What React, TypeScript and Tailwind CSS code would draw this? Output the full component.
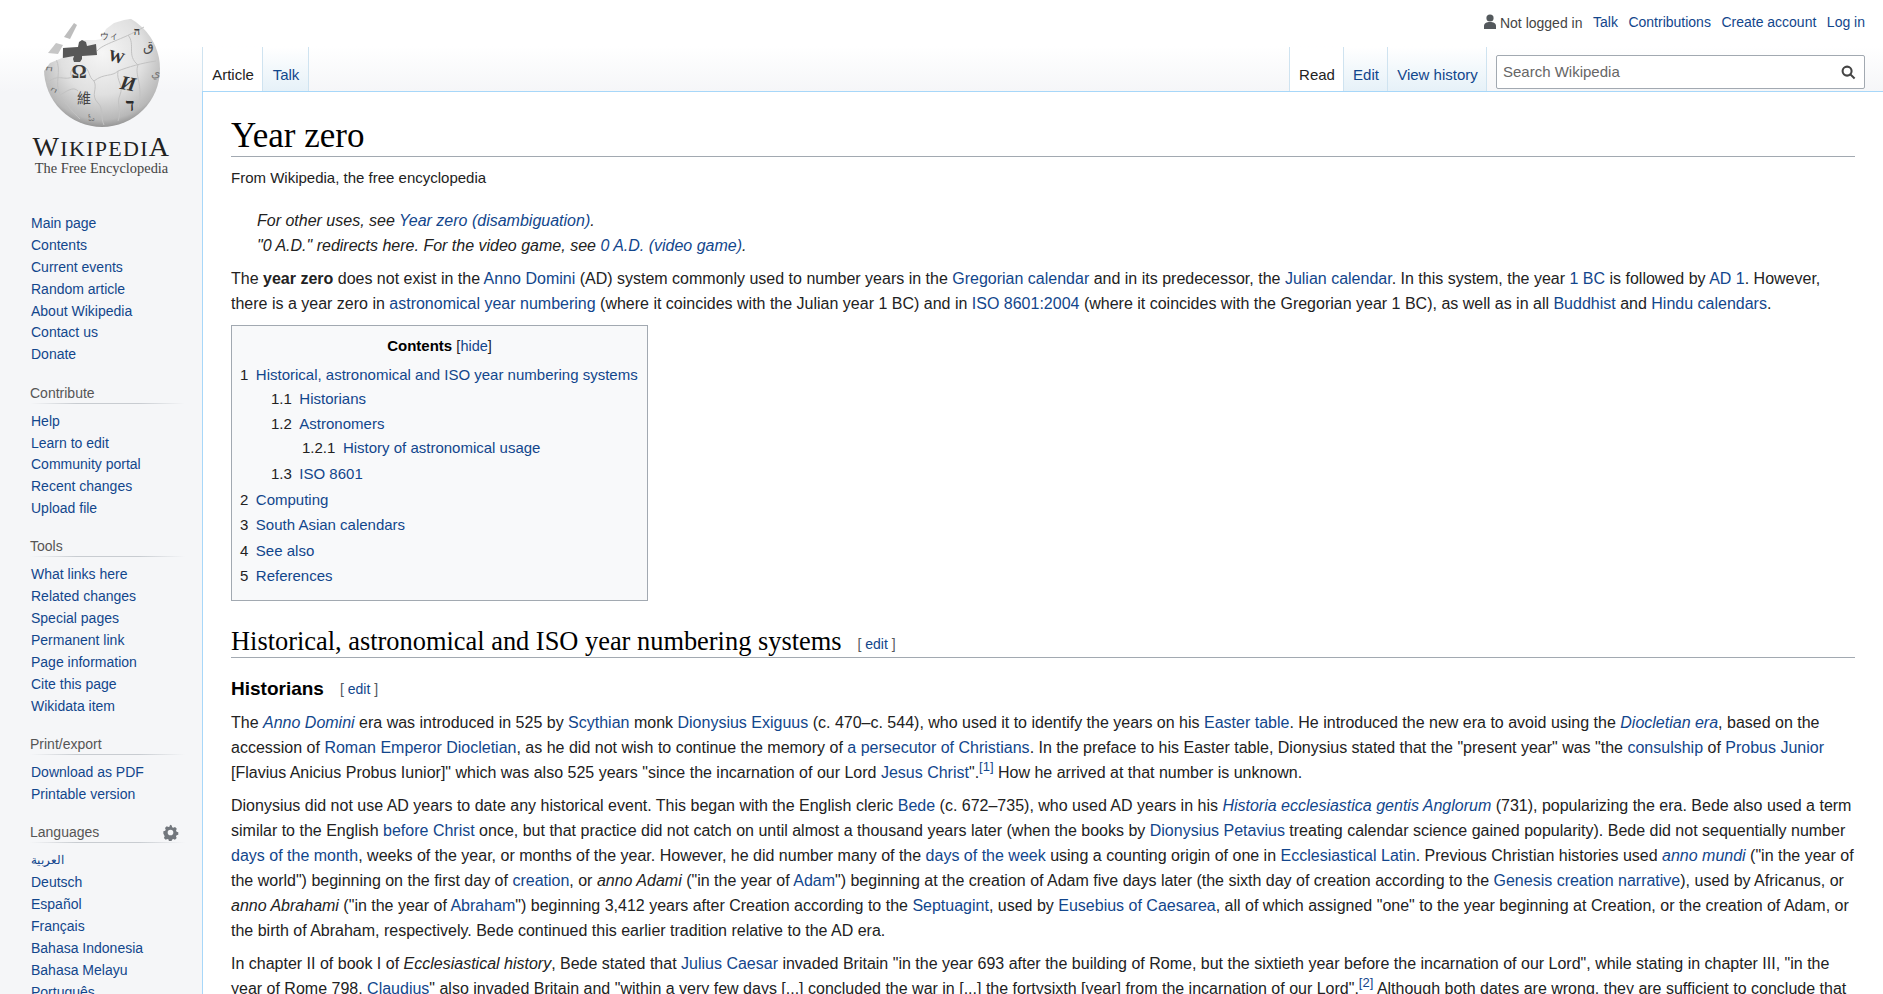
import { ReactNode } from "react";

const sans = "font-['Liberation_Sans',Arial,sans-serif]";

function L({ children }: { children: ReactNode }) {
  return <a className="text-[#12468c]">{children}</a>;
}

function Globe() {
  return (
    <svg width="116" height="116" viewBox="0 0 116 116" className="block">
      <defs>
        <radialGradient id="ball" cx="0.5" cy="0.36" r="0.72">
          <stop offset="0" stopColor="#f6f6f6" />
          <stop offset="0.5" stopColor="#e0e0e0" />
          <stop offset="0.8" stopColor="#b8b8b8" />
          <stop offset="1" stopColor="#6a6a6a" />
        </radialGradient>
        <clipPath id="notch">
          <path d="M116 116H0V60L6 52 18 47 19 37 34 36 38 29 52 29 57 28 62 18 70 12 80 9 92 7 100 10 116 10Z" />
        </clipPath>
      </defs>
      <g clipPath="url(#notch)">
        <circle cx="58" cy="58" r="58" fill="url(#ball)" />
        <g fill="none" stroke="#c2c2c2" strokeWidth="1">
          <path d="M3 72C14 62 20 70 28 66 24 60 30 54 40 56 46 58 44 66 50 70 60 62 68 66 74 60 84 56 98 52 112 50" />
          <path d="M53 40C60 32 76 30 100 16" />
          <path d="M50 70C54 78 46 84 54 92 60 98 56 106 60 114" />
          <path d="M74 60C72 70 80 74 76 84 72 92 78 100 74 110" />
          <path d="M84 24C92 34 82 44 94 54 90 64 100 74 94 96" />
          <path d="M12 48C18 60 10 72 16 84 24 96 28 100 36 108" />
          <path d="M16 84C26 78 30 76 34 80" />
        </g>
      </g>
      <path d="M20 26 30 12 33 14 26 28Z" fill="#bdbdbd" />
      <path d="M4 42 12 32 19 34 14 43Z" fill="#c6c6c6" />
      <path d="M19 37 34 36 35 31 38 29 42 31 43 35 52 33 53 44 38 45 38 48 36 51 30 51 29 48 30 45 19 47Z" fill="#585858" />
      <g fontFamily="'Liberation Serif',serif" textAnchor="middle">
        <text x="35" y="67" fontSize="19" fontWeight="bold" fill="#3c3c3c">Ω</text>
        <text x="71" y="51" fontSize="16" fontWeight="bold" fill="#333" transform="rotate(16 71 51)">W</text>
        <text x="83" y="79" fontSize="20" fontWeight="bold" fontStyle="italic" fill="#333" transform="rotate(10 83 79)">И</text>
        <text x="86" y="100" fontSize="18" fontWeight="bold" fill="#2a2a2a">ד</text>
        <text x="40" y="92" fontSize="14" fontFamily="'Noto Sans CJK SC',sans-serif" fill="#444">維</text>
        <text x="104" y="40" fontSize="14" fill="#4a4a4a">ق</text>
        <text x="111" y="66" fontSize="12" fill="#777">ي</text>
        <text x="65" y="28" fontSize="9" fill="#444">ウィ</text>
        <text x="93" y="24" fontSize="11" fontWeight="bold" fill="#3a3a3a">ה</text>
        <text x="8" y="58" fontSize="10" fill="#666" transform="rotate(-80 8 58)">ב</text>
        <text x="12" y="80" fontSize="9" fill="#666" transform="rotate(-60 12 80)">ב</text>
        <text x="47" y="110" fontSize="10" fill="#777">ಓ</text>
      </g>
    </svg>
  );
}

function Nav({ title, items, gear }: { title?: string; items: string[]; gear?: boolean }) {
  return (
    <div className="mb-[16.4px]">
      {title && (
        <div className="relative mb-[6px] ml-[30px] h-[22px] w-[155px] bg-[linear-gradient(to_right,transparent,#c8ccd1_30%,#c8ccd1_70%,transparent)] bg-[length:100%_1px] bg-bottom bg-no-repeat text-[14px] leading-[22px] text-[#555]">
          {title}
          {gear && (
            <svg viewBox="0 0 24 24" className="absolute right-[6px] top-[3px] h-[17px] w-[17px]" fill="#72777d">
              <path
                d="M13.8 2l.5 2.600c.6.2 1.2.4 1.7.8l2.400-1.100 2.500 2.500-1.100 2.400c.3.5.6 1.100.8 1.700l2.400.9v3.500l-2.500.5c-.2.6-.4 1.200-.8 1.700l1.100 2.400-2.500 2.500-2.400-1.100c-.5.3-1.100.6-1.700.8l-.9 2.500h-3.500l-.5-2.600c-.6-.2-1.200-.4-1.700-.8l-2.400 1.100-2.500-2.500 1.100-2.400c-.3-.5-.6-1.100-.8-1.700L1.900 13.700v-3.500l2.600-.5c.2-.6.4-1.200.8-1.700L4.200 5.600l2.500-2.500 2.400 1.100c.5-.3 1.100-.6 1.700-.8l.5-2.500zM12 8a4 4 0 100 8 4 4 0 000-8z"
                fillRule="evenodd"
              />
            </svg>
          )}
        </div>
      )}
      <ul className="pl-[31px]">
        {items.map((it) => (
          <li key={it} className={`h-[21.9px] leading-[22px] text-[#12468c] ${it === "العربية" ? "text-[12px]" : "text-[14px]"}`}>
            {it}
          </li>
        ))}
      </ul>
    </div>
  );
}

function Sidebar() {
  return (
    <aside className="w-[202px] shrink-0">
      <div className="flex h-[212px] flex-col items-center pl-[1px] pt-[11px]">
        <Globe />
        <div className="mt-[8px] font-['Liberation_Serif',serif] text-[22px] leading-[24px] tracking-[1.3px] text-[#222]">
          <span className="text-[28px]">W</span>IKIPEDI<span className="text-[28px]">A</span>
        </div>
        <div className="font-['Liberation_Serif',serif] text-[14.4px] leading-[14px] text-[#444]">The Free Encyclopedia</div>
      </div>
      <Nav items={["Main page", "Contents", "Current events", "Random article", "About Wikipedia", "Contact us", "Donate"]} />
      <Nav title="Contribute" items={["Help", "Learn to edit", "Community portal", "Recent changes", "Upload file"]} />
      <Nav title="Tools" items={["What links here", "Related changes", "Special pages", "Permanent link", "Page information", "Cite this page", "Wikidata item"]} />
      <Nav title="Print/export" items={["Download as PDF", "Printable version"]} />
      <Nav title="Languages" gear items={["العربية", "Deutsch", "Español", "Français", "Bahasa Indonesia", "Bahasa Melayu", "Português"]} />
    </aside>
  );
}

function Tab({ label, active, w }: { label: string; active?: boolean; w: string }) {
  return (
    <div
      className={`${w} flex h-[44px] items-center justify-center border-r border-r-[#cfe3f0] pl-[1px] pt-[12px] text-[15px] ${
        active ? "bg-white text-[#222]" : "bg-linear-to-b from-white to-[#e6f1f8] text-[#12468c]"
      }`}
    >
      {label}
    </div>
  );
}

function Header() {
  return (
    <div className="flex h-[92px] flex-col">
      <div className="flex h-[48px] items-start justify-end gap-[10.5px] pr-[18px] pt-[12px] text-[14px] leading-[20px] text-[#12468c]">
        <span className="flex items-center pt-[1px] text-[#444]">
          <svg viewBox="0 0 14 16" className="mb-[3px] mr-[3px] h-[16px] w-[14px]" fill="#54595d">
            <circle cx="7" cy="4" r="3.6" />
            <path d="M1 15v-3c0-2.600 2.500-4 6-4s6 1.400 6 4v3z" />
          </svg>
          Not logged in
        </span>
        <span>Talk</span>
        <span>Contributions</span>
        <span>Create account</span>
        <span>Log in</span>
      </div>
      <div className="flex h-[44px] items-end border-b border-[#a7d7f9]">
        <div className="flex h-[44px] border-l border-l-[#cfe3f0]">
          <Tab label="Article" active w="w-[60px]" />
          <Tab label="Talk" w="w-[46px]" />
        </div>
        <div className="flex-1" />
        <div className="flex h-[44px] border-l border-l-[#cfe3f0]">
          <Tab label="Read" active w="w-[54px]" />
          <Tab label="Edit" w="w-[44px]" />
          <Tab label="View history" w="w-[99px]" />
        </div>
        <div className="mb-[2px] ml-[9px] mr-[18px] flex h-[34px] w-[369px] items-center justify-between rounded-[2px] border border-[#a2a9b1] bg-white pl-[6px] pr-[8px] pt-[1px] text-[15px] text-[#666]">
          Search Wikipedia
          <svg viewBox="0 0 16 16" className="h-[15px] w-[15px]" fill="none" stroke="#444" strokeWidth="2.2">
            <circle cx="6.5" cy="6.5" r="4.8" />
            <path d="M10 10l4.500 4.500" />
          </svg>
        </div>
      </div>
    </div>
  );
}

const tocRows = [
  { n: "1", t: "Historical, astronomical and ISO year numbering systems", pad: "pl-0", mb: "" },
  { n: "1.1", t: "Historians", pad: "pl-[31px]", mb: "" },
  { n: "1.2", t: "Astronomers", pad: "pl-[31px]", mb: "" },
  { n: "1.2.1", t: "History of astronomical usage", pad: "pl-[62px]", mb: "mb-[1px]" },
  { n: "1.3", t: "ISO 8601", pad: "pl-[31px]", mb: "mb-[1px]" },
  { n: "2", t: "Computing", pad: "pl-0", mb: "mb-[1px]" },
  { n: "3", t: "South Asian calendars", pad: "pl-0", mb: "mb-[1px]" },
  { n: "4", t: "See also", pad: "pl-0", mb: "mb-[1px]" },
  { n: "5", t: "References", pad: "pl-0", mb: "" },
];

function Toc() {
  return (
    <div className="mt-[8px] h-[276px] w-[417px] border border-[#a2a9b1] bg-[#f8f9fa] px-[8px] pt-[8px] text-[15px]">
      <div className="mb-[5px] h-[24px] text-center leading-[24px]">
        <b className="text-[#000]">Contents</b> <span className="text-[14.5px]">[<L>hide</L>]</span>
      </div>
      {tocRows.map((r) => (
        <div key={r.n} className={`flex h-[24.6px] gap-[7.5px] whitespace-nowrap leading-[24.6px] text-[#222] ${r.pad} ${r.mb}`}>
          <span>{r.n}</span>
          <L>{r.t}</L>
        </div>
      ))}
    </div>
  );
}

function EditLink() {
  return (
    <span className={`${sans} ml-[16px] align-[1px] text-[14px] font-normal text-[#54595d]`}>
      [ <L>edit</L> ]
    </span>
  );
}

function Article() {
  return (
    <main className="h-[902px] overflow-hidden border-l border-[#a7d7f9] bg-white px-[28px] pt-[20px] text-[16px] leading-[24.9px] text-[#222]">
      <h1 className="h-[45px] border-b border-[#a2a9b1] font-['Liberation_Serif',serif] text-[35px] leading-[48px] text-[#000]">
        Year zero
      </h1>
      <div className="mt-[8px] h-[25px] text-[15px] leading-[25px]">From Wikipedia, the free encyclopedia</div>
      <div className="mt-[19px] pl-[26px] italic">
        <div>
          For other uses, see <L>Year zero (disambiguation)</L>.
        </div>
        <div>
          "0 A.D." redirects here. For the video game, see <L>0 A.D. (video game)</L>.
        </div>
      </div>
      <p className="mt-[8px]">
        The <b>year zero</b> does not exist in the <L>Anno Domini</L> (AD) system commonly used to number years in the <L>Gregorian calendar</L> and in its predecessor, the <L>Julian calendar</L>. In this system, the year <L>1 BC</L> is followed by <L>AD 1</L>. However, there is a year zero in <L>astronomical year numbering</L> (where it coincides with the Julian year 1 BC) and in <L>ISO 8601:2004</L> (where it coincides with the Gregorian year 1 BC), as well as in all <L>Buddhist</L> and <L>Hindu calendars</L>.
      </p>
      <Toc />
      <h2 className="mt-[22px] h-[35px] border-b border-[#a2a9b1] font-['Liberation_Serif',serif] text-[26.4px] leading-[36px] text-[#000]">
        Historical, astronomical and ISO year numbering systems
        <EditLink />
      </h2>
      <h3 className={`${sans} mt-[17px] h-[28px] text-[19px] font-bold leading-[28px] text-[#000]`}>
        Historians
        <EditLink />
      </h3>
      <p className="mt-[8.5px]">
        The <L><i>Anno Domini</i></L> era was introduced in 525 by <L>Scythian</L> monk <L>Dionysius Exiguus</L> (c. 470–c. 544), who used it to identify the years on his <L>Easter table</L>. He introduced the new era to avoid using the <L><i>Diocletian era</i></L>, based on the accession of <L>Roman Emperor Diocletian</L>, as he did not wish to continue the memory of <L>a persecutor of Christians</L>. In the preface to his Easter table, Dionysius stated that the "present year" was "the <L>consulship</L> of <L>Probus Junior</L> [Flavius Anicius Probus Iunior]" which was also 525 years "since the incarnation of our Lord <L>Jesus Christ</L>".<sup className="text-[13px]"><L>[1]</L></sup> How he arrived at that number is unknown.
      </p>
      <p className="mt-[8.5px]">
        Dionysius did not use AD years to date any historical event. This began with the English cleric <L>Bede</L> (c. 672–735), who used AD years in his <L><i>Historia ecclesiastica gentis Anglorum</i></L> (731), popularizing the era. Bede also used a term similar to the English <L>before Christ</L> once, but that practice did not catch on until almost a thousand years later (when the books by <L>Dionysius Petavius</L> treating calendar science gained popularity). Bede did not sequentially number <L>days of the month</L>, weeks of the year, or months of the year. However, he did number many of the <L>days of the week</L> using a counting origin of one in <L>Ecclesiastical Latin</L>. Previous Christian histories used <L><i>anno mundi</i></L> ("in the year of the world") beginning on the first day of <L>creation</L>, or <i>anno Adami</i> ("in the year of <L>Adam</L>") beginning at the creation of Adam five days later (the sixth day of creation according to the <L>Genesis creation narrative</L>), used by Africanus, or <i>anno Abrahami</i> ("in the year of <L>Abraham</L>") beginning 3,412 years after Creation according to the <L>Septuagint</L>, used by <L>Eusebius of Caesarea</L>, all of which assigned "one" to the year beginning at Creation, or the creation of Adam, or the birth of Abraham, respectively. Bede continued this earlier tradition relative to the AD era.
      </p>
      <p className="mt-[8px]">
        In chapter II of book I of <i>Ecclesiastical history</i>, Bede stated that <L>Julius Caesar</L> invaded Britain "in the year 693 after the building of Rome, but the sixtieth year before the incarnation of our Lord", while stating in chapter III, "in the year of Rome 798, <L>Claudius</L>" also invaded Britain and "within a very few days [...] concluded the war in [...] the fortysixth [year] from the incarnation of our Lord".<sup className="text-[13px]"><L>[2]</L></sup> Although both dates are wrong, they are sufficient to conclude that
      </p>
    </main>
  );
}

export default function App() {
  return (
    <div className={`${sans} flex h-[994px] overflow-hidden bg-[linear-gradient(to_bottom,#fff_46px,#f5f6f8_92px)]`}>
      <Sidebar />
      <div className="min-w-0 flex-1">
        <Header />
        <Article />
      </div>
    </div>
  );
}
